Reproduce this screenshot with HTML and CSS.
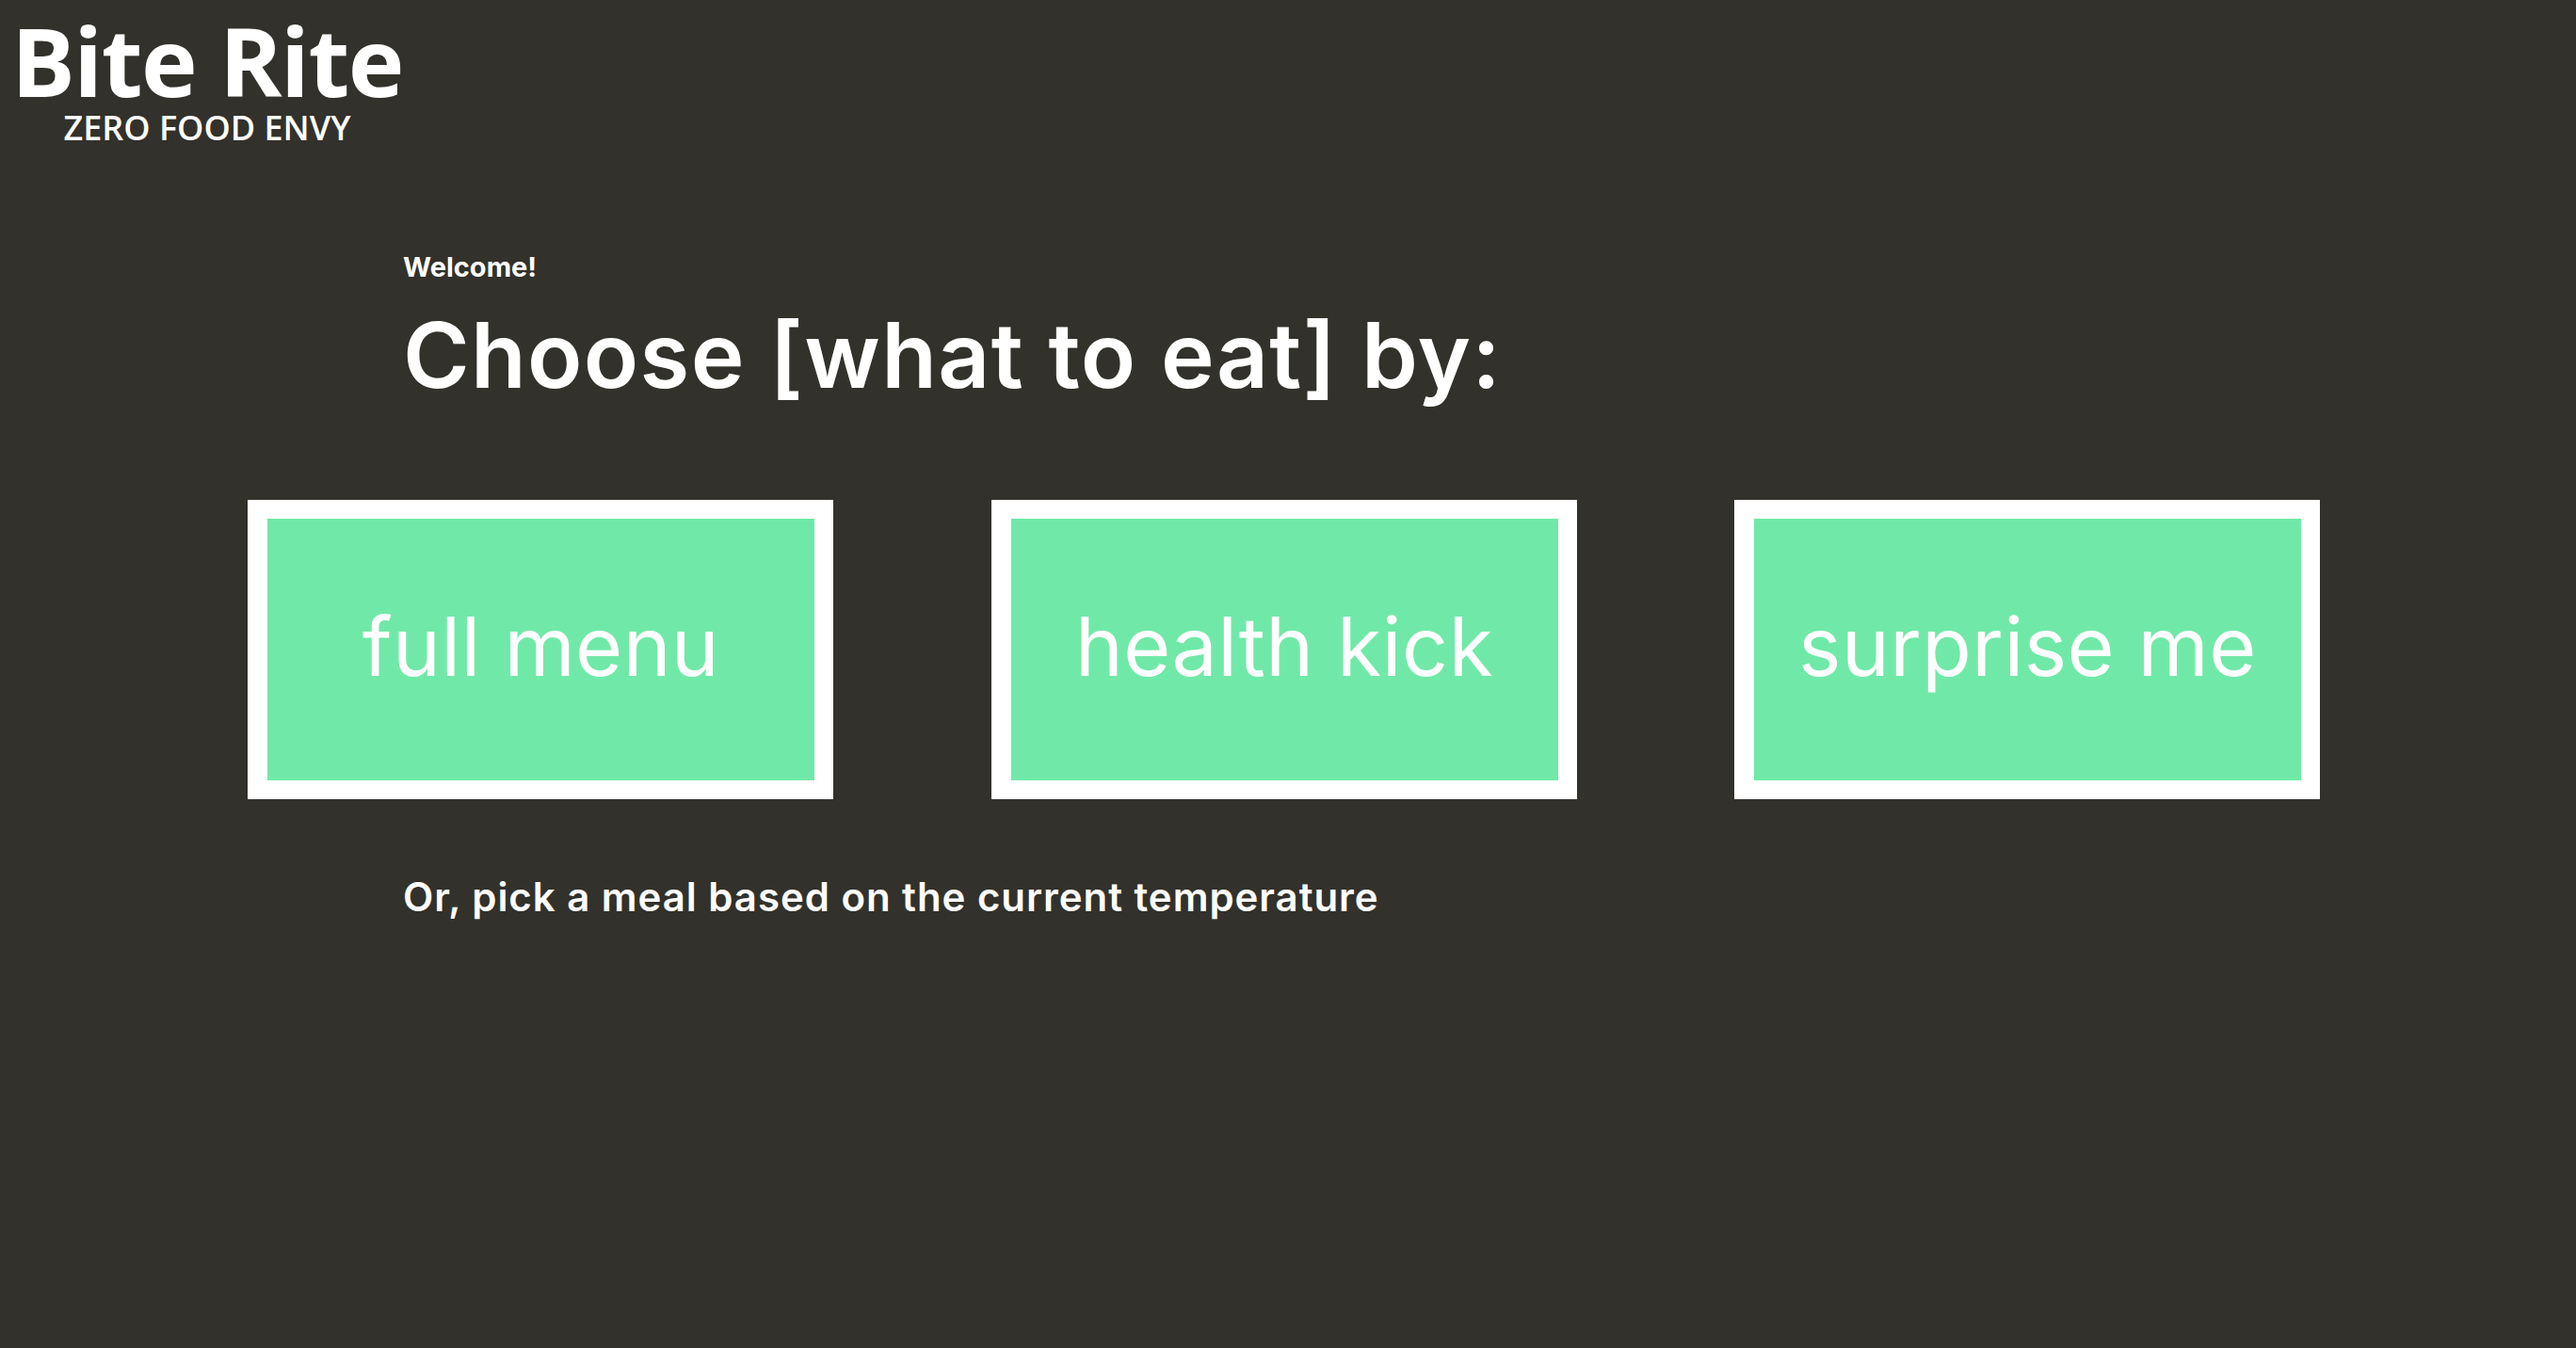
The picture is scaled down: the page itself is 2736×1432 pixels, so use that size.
FILE: index.html
```html
<!DOCTYPE html>
<html lang="en">
<head>
<meta charset="utf-8">
<title>Bite Rite</title>
<link rel="stylesheet" href="styles.css">
</head>
<body>
<header class="brand">
  <div class="brand-name">Bite Rite</div>
  <div class="brand-tag">ZERO FOOD ENVY</div>
</header>
<main class="main">
  <section class="intro">
    <p class="welcome">Welcome!</p>
    <h1 class="title">Choose [what to eat] by:</h1>
  </section>
  <nav class="choices">
    <a class="choice" href="#">full menu</a>
    <a class="choice" href="#">health kick</a>
    <a class="choice" href="#">surprise me</a>
  </nav>
  <p class="temp">Or, pick a meal based on the current temperature</p>
</main>
</body>
</html>
```
FILE: styles.css
```css
html, body {
  margin: 0;
  padding: 0;
}
body {
  background: #32312b;
  color: #ffffff;
  font-family: "Inter", "Roboto", sans-serif;
  min-height: 1432px;
}
.brand {
  display: inline-flex;
  flex-direction: column;
  align-items: center;
  padding: 0 0 0 12px;
}
.brand-name {
  font-family: "Open Sans", "Noto Sans", sans-serif;
  font-weight: 700;
  font-size: 101px;
  line-height: 100px;
  letter-spacing: -1.5px;
  margin-top: 14px;
}
.brand-tag {
  font-family: "Open Sans", "Noto Sans", sans-serif;
  font-weight: 600;
  font-size: 36px;
  line-height: 40px;
  margin-top: 2px;
}
.main {
  padding-left: 428px;
}
.intro {
  padding-top: 110px;
}
.welcome {
  margin: 0;
  font-weight: 700;
  font-size: 29px;
  line-height: 36px;
}
.title {
  margin: 20px 0 0;
  font-weight: 600;
  font-size: 96px;
  line-height: 110px;
  letter-spacing: 1.3px;
}
.choices {
  display: flex;
  gap: 167.5px;
  margin: 99px 0 0 -165px;
}
.choice {
  box-sizing: border-box;
  width: 622px;
  height: 318px;
  border: 20px solid #ffffff;
  border-left-width: 21px;
  background: #70e9a8;
  color: #ffffff;
  text-decoration: none;
  display: flex;
  align-items: center;
  justify-content: center;
  font-size: 86px;
  font-weight: 400;
  letter-spacing: 0.4px;
  padding-bottom: 6px;
}
.temp {
  margin: 80px 0 0;
  font-weight: 600;
  font-size: 42px;
  line-height: 48px;
  letter-spacing: 0.95px;
}
```
